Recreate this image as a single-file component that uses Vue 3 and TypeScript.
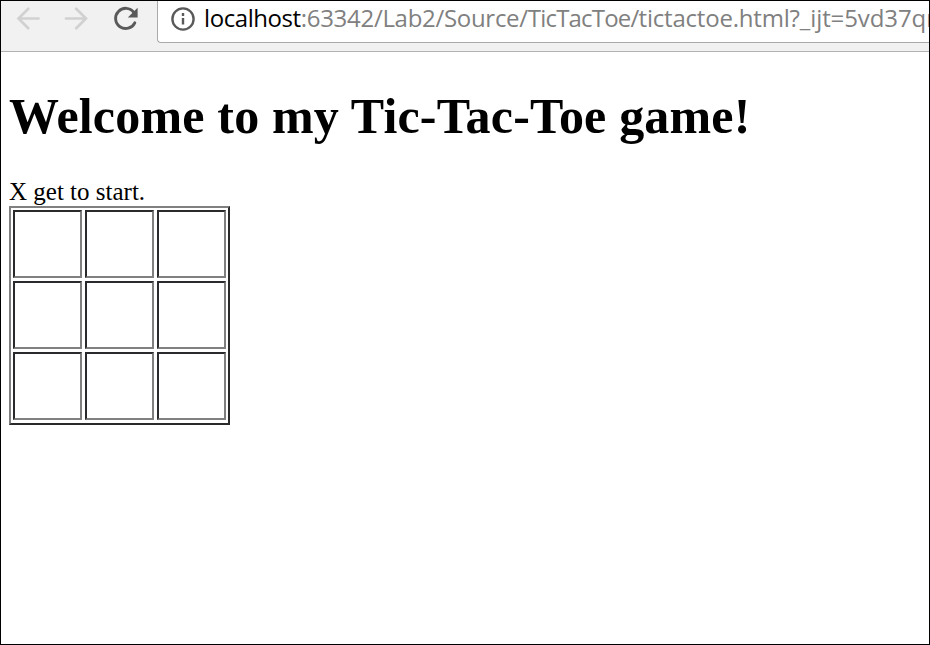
<script setup lang="ts">
import { ref } from 'vue'

type Mark = '' | 'X' | 'O'
const board = ref<Mark[][]>([
  ['', '', ''],
  ['', '', ''],
  ['', '', ''],
])
</script>

<template>
  <div class="window">
    <header class="toolbar">
      <nav class="controls">
        <svg class="icon" viewBox="0 0 26 26" aria-label="Back">
          <path d="M24.5 12.5H4.5M14.3 2.8L4.5 12.5L14.3 22.2" class="arrow" />
        </svg>
        <svg class="icon" viewBox="0 0 26 26" aria-label="Forward">
          <path d="M3 12.5H23M13.2 2.8L23 12.5L13.2 22.2" class="arrow" />
        </svg>
        <svg class="icon" viewBox="0 0 26 26" aria-label="Reload">
          <path d="M21.8 6.4A10.1 10.1 0 1 0 22.8 16.8" class="reload" />
          <path d="M25.6 1.8V11.6H15.8Z" class="reload-head" />
        </svg>
      </nav>
      <div class="address">
        <svg class="info" viewBox="0 0 24 24" aria-label="Site information">
          <circle cx="12" cy="12" r="10.6" />
          <path d="M12 11V17.5M12 6V9" />
        </svg>
        <div class="url"><span class="host">localhost</span><span class="path">:63342/Lab2/Source/</span><span class="folder">TicTacToe/</span><span class="file">tictactoe.html</span><span class="query">?_ijt=5vd37qr</span></div>
      </div>
    </header>
    <main class="page">
      <h1>Welcome to my Tic-Tac-Toe game!</h1>
      <p class="status">X get to start.</p>
      <div class="board">
        <template v-for="(row, r) in board" :key="r">
          <div v-for="(mark, c) in row" :key="c" class="cell">{{ mark }}</div>
        </template>
      </div>
    </main>
  </div>
</template>

<style>
body {
  margin: 0;
}
</style>

<style scoped>
.window {
  box-sizing: border-box;
  width: 930px;
  height: 645px;
  border: 1px solid #000;
  background: #fff;
  overflow: hidden;
}
.toolbar {
  box-sizing: border-box;
  display: flex;
  height: 51px;
  background: #f1f1f1;
  border-bottom: 1px solid #b2b2b2;
}
.controls {
  box-sizing: border-box;
  display: flex;
  gap: 23px;
  padding: 5px 0 0 13px;
  width: 156px;
  flex: none;
}
.icon {
  width: 26px;
  height: 26px;
  flex: none;
}
.arrow {
  fill: none;
  stroke: #d1d1d1;
  stroke-width: 2.7;
  stroke-linecap: round;
}
.reload {
  fill: none;
  stroke: #5a5a5a;
  stroke-width: 2.9;
  stroke-linecap: round;
}
.reload-head {
  fill: #5a5a5a;
}
.address {
  box-sizing: border-box;
  display: flex;
  flex: 1;
  min-width: 0;
  height: 42px;
  padding-left: 13px;
  background: #fff;
  border: solid #aaa;
  border-width: 0 0 1px 1px;
  border-bottom-left-radius: 4px;
  overflow: hidden;
}
.info {
  width: 24px;
  height: 24px;
  margin-top: 6px;
  flex: none;
  fill: none;
  stroke: #5a5a5a;
  stroke-width: 2.4;
}
.url {
  margin-left: 9px;
  font: 24px/34px "Open Sans", "Noto Sans", sans-serif;
  color: #808080;
  white-space: nowrap;
}
.host {
  color: #000;
  letter-spacing: -0.42px;
}
.path {
  letter-spacing: -0.3px;
}
.folder {
  letter-spacing: -0.8px;
}
.file {
  letter-spacing: -0.2px;
}
.query {
  letter-spacing: -0.1px;
}
.page {
  padding: 0 8px;
  font-family: "Liberation Serif", serif;
  color: #000;
}
h1 {
  margin: 35px 0 0;
  font-size: 50px;
  line-height: 58px;
  letter-spacing: 0.18px;
  white-space: nowrap;
}
.status {
  margin: 33px 0 0;
  font-size: 25px;
  line-height: 28px;
  height: 28px;
}
.board {
  box-sizing: border-box;
  display: grid;
  grid-template-columns: repeat(3, 69px);
  grid-template-rows: repeat(3, 68px);
  gap: 3px;
  width: 221px;
  height: 219px;
  padding: 2px;
  border: 2px solid;
  border-color: #808080 #2a2a2c #2a2a2c #808080;
}
.cell {
  box-sizing: border-box;
  display: flex;
  align-items: center;
  justify-content: center;
  border: 2px solid;
  border-color: #2a2a2c #808080 #808080 #2a2a2c;
  font-size: 25px;
}
</style>
